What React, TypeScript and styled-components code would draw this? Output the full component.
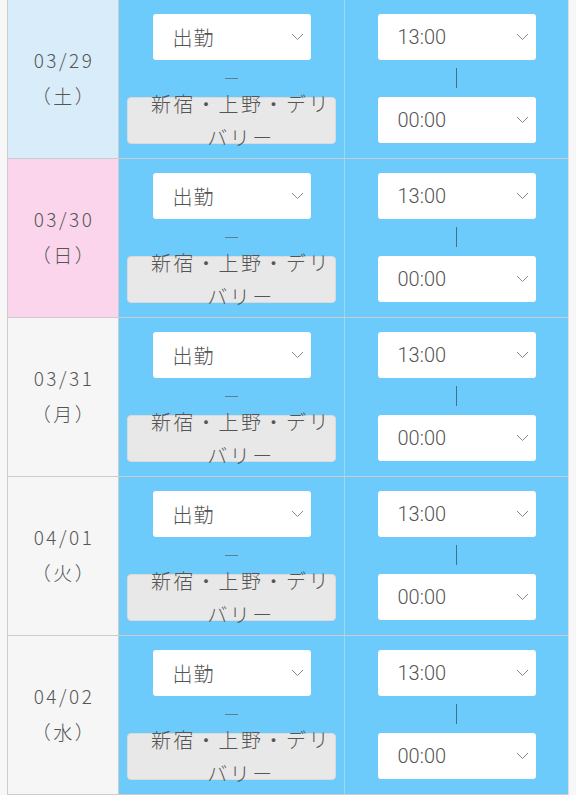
import * as React from "react";
import styled, { createGlobalStyle } from "styled-components";

const GlobalStyle = createGlobalStyle`
    html, body {
        margin: 0;
        padding: 0;
        background: #f7f7f7;
    }
    body {
        font-family: Roboto, "Noto Sans CJK JP", sans-serif;
        color: #555555;
    }
`;

const Colors = {
    blue: "#6ccbfb",
    saturday: "#d9ecf9",
    sunday: "#fad5eb",
    weekday: "#f6f6f6",
    text: "#555555",
    border: "#cccccc",
    innerBorder: "#9fd6f2"
};

type DayKind = "sat" | "sun" | "week";

const Page = styled.div`
    padding: 0 7px;
`;

const Table = styled.div`
    display: flex;
    flex-direction: column;
    border-left: 1px solid ${Colors.border};
    border-right: 1px solid #dddddd;
`;

const Row = styled.div`
    display: grid;
    grid-template-columns: 111px 226px 1fr;
    height: 158px;
    border-bottom: 1px solid ${Colors.border};
`;

const DateCell = styled.div<{ $kind: DayKind }>`
    display: flex;
    flex-direction: column;
    align-items: center;
    justify-content: center;
    background: ${(p) =>
        p.$kind === "sat"
            ? Colors.saturday
            : p.$kind === "sun"
            ? Colors.sunday
            : Colors.weekday};
    border-right: 1px solid ${Colors.border};
    font-family: "Noto Sans CJK JP", sans-serif;
    font-weight: 300;
    font-size: 19px;
    line-height: 36px;
    letter-spacing: 2.5px;
    color: ${Colors.text};
    padding: 0 0 2px 2px;
    box-sizing: border-box;
`;

const BlueCell = styled.div<{ $divider?: boolean }>`
    display: flex;
    flex-direction: column;
    align-items: center;
    background: ${Colors.blue};
    padding-top: 14px;
    box-sizing: border-box;
    border-right: ${(p) => (p.$divider ? `1px solid ${Colors.innerBorder}` : "none")};
`;

const Select = styled.div`
    width: 158px;
    height: 46px;
    box-sizing: border-box;
    background: #ffffff;
    border-radius: 3px;
    display: flex;
    align-items: center;
    justify-content: space-between;
    padding: 0 7px 0 20px;
    font-family: Roboto, "Noto Sans CJK JP", sans-serif;
    font-size: 20px;
    color: ${Colors.text};
`;

const SelectLabel = styled.span<{ $spacing?: number }>`
    letter-spacing: ${(p) => p.$spacing ?? 0}px;
    font-weight: 300;
`;

const Separator = styled.div`
    height: 37px;
    display: flex;
    align-items: center;
    justify-content: center;
    &::after {
        content: "";
        width: 13px;
        height: 1px;
        margin-top: 0px;
        background: #5f7f90;
    }
`;

const VerticalBar = styled.div`
    height: 37px;
    display: flex;
    justify-content: center;
    &::after {
        content: "";
        width: 1px;
        height: 20px;
        margin-top: 8px;
        background: #41708a;
    }
`;

const AreaBox = styled.div`
    width: 209px;
    height: 47px;
    box-sizing: border-box;
    background: #e8e8e8;
    border: 1px solid #dadada;
    border-radius: 4px;
    display: flex;
    align-items: center;
    justify-content: center;
    padding: 0 0 0 20px;
    margin-left: -1px;
    text-align: center;
    font-family: "Noto Sans CJK JP", sans-serif;
    font-weight: 300;
    font-size: 20px;
    line-height: 34px;
    letter-spacing: 2.5px;
    color: ${Colors.text};
    overflow: visible;
`;

const AreaText = styled.span`
    display: block;
`;

const Chevron = () => (
    <svg width="13" height="8" viewBox="0 0 13 8" fill="none">
        <polyline
            points="1,1 6.5,6.5 12,1"
            stroke="#8a8a8a"
            strokeWidth="1"
            fill="none"
        />
    </svg>
);

const days: { date: string; wd: string; kind: DayKind }[] = [
    { date: "03/29", wd: "（土）", kind: "sat" },
    { date: "03/30", wd: "（日）", kind: "sun" },
    { date: "03/31", wd: "（月）", kind: "week" },
    { date: "04/01", wd: "（火）", kind: "week" },
    { date: "04/02", wd: "（水）", kind: "week" }
];

export default function App() {
    return (
        <Page>
            <GlobalStyle />
            <Table>
                {days.map((d) => (
                    <Row key={d.date}>
                        <DateCell $kind={d.kind}>
                            <span>{d.date}</span>
                            <span>{d.wd}</span>
                        </DateCell>
                        <BlueCell $divider>
                            <Select>
                                <SelectLabel $spacing={1}>出勤</SelectLabel>
                                <Chevron />
                            </Select>
                            <Separator />
                            <AreaBox>
                                <AreaText>新宿・上野・デリバリー</AreaText>
                            </AreaBox>
                        </BlueCell>
                        <BlueCell>
                            <Select>
                                <SelectLabel>13:00</SelectLabel>
                                <Chevron />
                            </Select>
                            <VerticalBar />
                            <Select>
                                <SelectLabel>00:00</SelectLabel>
                                <Chevron />
                            </Select>
                        </BlueCell>
                    </Row>
                ))}
            </Table>
        </Page>
    );
}
